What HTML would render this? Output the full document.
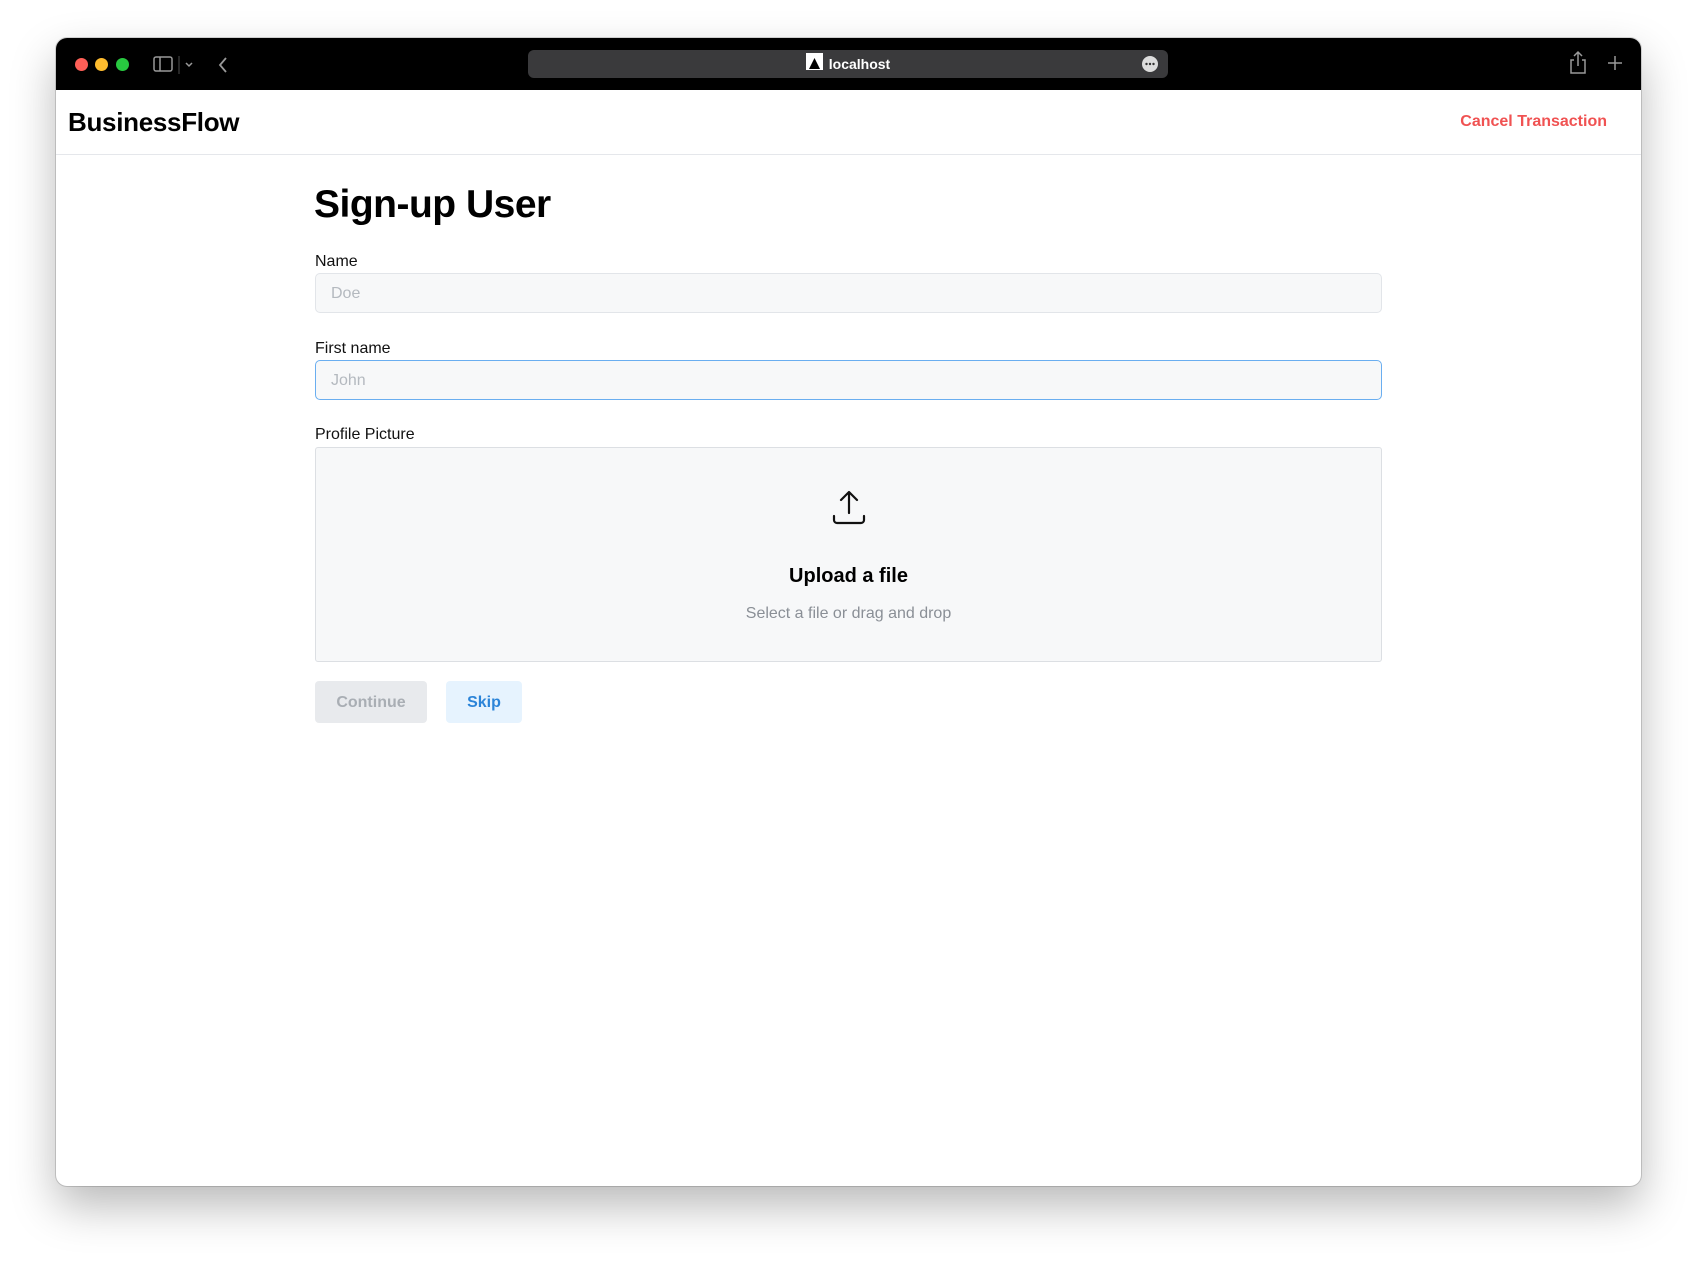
<!DOCTYPE html>
<html><head><meta charset="utf-8"><style>
*{box-sizing:border-box;margin:0;padding:0}
body{width:1697px;height:1261px;background:#fff;font-family:"Liberation Sans",Arial,sans-serif;position:relative;overflow:hidden}
.win{position:absolute;left:56px;top:38px;width:1585px;height:1148px;border-radius:11px;background:#fff;overflow:hidden;box-shadow:0 20px 45px rgba(0,0,0,.28),0 0 0 1px rgba(0,0,0,.15)}
.bar{position:absolute;left:0;top:0;width:100%;height:52px;background:#000}
.dot{position:absolute;top:20px;width:13px;height:13px;border-radius:50%}
.url{position:absolute;left:472px;top:12px;width:640px;height:28px;border-radius:6px;background:#3a3a3c;color:#fff;font-size:14px;font-weight:bold;text-align:center;line-height:28px}
.hdr{position:absolute;top:52px;left:0;width:100%;height:65px;border-bottom:1px solid #e5e7eb}
.abs{position:absolute}
.lbl{position:absolute;left:259px;font-size:16px;color:#111}
.inp{position:absolute;left:259px;width:1067px;height:40px;border:1px solid #e2e5e9;border-radius:5px;background:#f7f8f9;font-size:16px;color:#b4b9bf;padding-left:15px;line-height:40px}
</style></head><body>
<div class="win">
 <div class="bar">
  <div class="dot" style="left:19px;background:#fe5f57"></div>
  <div class="dot" style="left:39px;background:#febc2e"></div>
  <div class="dot" style="left:60px;background:#28c840"></div>
  <svg class="abs" style="left:97px;top:17px" width="60" height="20" fill="none" stroke="#999" stroke-width="1.5"><rect x="1" y="2" width="18" height="14" rx="2"/><line x1="7" y1="2" x2="7" y2="16"/><line x1="26" y1="1" x2="26" y2="19" stroke="#333"/><path d="M33 8l3 3 3-3"/></svg>
  <svg class="abs" style="left:160px;top:17px" width="14" height="20" fill="none" stroke="#999" stroke-width="1.8"><path d="M10 3L4 10l6 7"/></svg>
  <div class="url"><span style="display:inline-block;width:17px;height:17px;background:#fff;vertical-align:-3px;margin-right:6px;position:relative"><svg width="17" height="17"><path d="M8.5 3L14 14H3z" fill="#000"/></svg></span>localhost
   <svg class="abs" style="right:10px;top:6px" width="16" height="16"><circle cx="8" cy="8" r="8" fill="#ddd"/><circle cx="4.5" cy="8" r="1.2" fill="#333"/><circle cx="8" cy="8" r="1.2" fill="#333"/><circle cx="11.5" cy="8" r="1.2" fill="#333"/></svg></div>
  <svg class="abs" style="left:1512px;top:12px" width="20" height="26" fill="none" stroke="#999" stroke-width="1.5"><path d="M6 10H3v13h14V10h-3M10 2v14M6 6l4-4 4 4"/></svg>
  <svg class="abs" style="left:1550px;top:16px" width="18" height="18" stroke="#999" stroke-width="1.5"><path d="M9 2v14M2 9h14"/></svg>
 </div>
 <div class="hdr">
  <div class="abs" style="left:12px;top:17px;font-size:26px;font-weight:bold;color:#000;letter-spacing:-.3px">BusinessFlow</div>
  <div class="abs" style="right:34px;top:23px;font-size:16px;font-weight:bold;color:#f05252">Cancel Transaction</div>
 </div>
 <div class="abs" style="left:258px;top:145px;font-size:39px;font-weight:bold;color:#000;letter-spacing:-.5px">Sign-up User</div>
 <div class="lbl" style="top:215px">Name</div>
 <div class="inp" style="top:235px">Doe</div>
 <div class="lbl" style="top:302px">First name</div>
 <div class="inp" style="top:322px;border-color:#6aaef0">John</div>
 <div class="lbl" style="top:388px">Profile Picture</div>
 <div class="abs" style="left:259px;top:409px;width:1067px;height:215px;border:1px solid #dcdfe3;border-radius:3px;background:#f7f8f9;text-align:center">
  <svg class="abs" style="left:516px;top:42px" width="34" height="36" fill="none" stroke="#111" stroke-width="2.2" stroke-linecap="round" stroke-linejoin="round"><path d="M17 3v20M9 10l8-8 8 8M2 26v4a3 3 0 0 0 3 3h24a3 3 0 0 0 3-3v-4"/></svg>
  <div class="abs" style="left:0;width:100%;top:117px;font-size:20px;font-weight:bold;color:#000">Upload a file</div>
  <div class="abs" style="left:0;width:100%;top:157px;font-size:16px;color:#8a8f96">Select a file or drag and drop</div>
 </div>
 <div class="abs" style="left:259px;top:643px;width:112px;height:42px;border-radius:4px;background:#e8eaed;color:#a9aeb4;font-size:16px;font-weight:bold;text-align:center;line-height:44px">Continue</div>
 <div class="abs" style="left:390px;top:643px;width:76px;height:42px;border-radius:4px;background:#e6f3fe;color:#2b84d8;font-size:16px;font-weight:bold;text-align:center;line-height:44px">Skip</div>
</div>
</body></html>
